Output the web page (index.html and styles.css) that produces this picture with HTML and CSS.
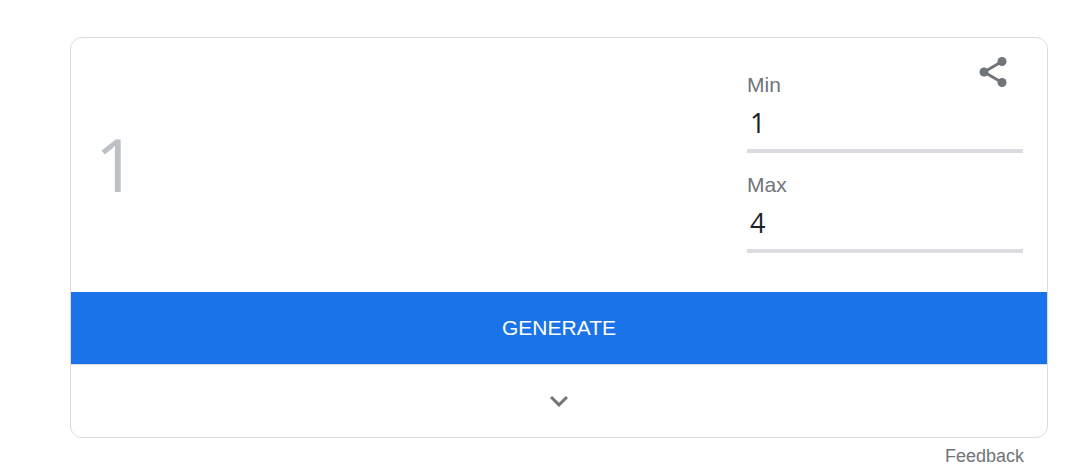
FILE: index.html
```html
<!DOCTYPE html>
<html lang="en">
<head>
<meta charset="utf-8">
<title>Random number generator</title>
<link rel="stylesheet" href="styles.css">
</head>
<body>
<main class="widget">
  <section class="card">
    <div class="card-body">
      <output class="result" for="min max">1</output>
      <form class="range" id="range">
        <label class="label" for="min">Min</label>
        <input class="number" id="min" type="text" inputmode="numeric" value="1">
        <label class="label" for="max">Max</label>
        <input class="number" id="max" type="text" inputmode="numeric" value="4">
      </form>
      <button class="share" type="button" aria-label="Share">
        <svg class="share-icon" viewBox="0 0 24 24" aria-hidden="true"><path d="M6 12L18 5M6 12L18 19" fill="none" stroke="#70757a" stroke-width="2"/><circle cx="6" cy="12" r="3"/><circle cx="18" cy="5" r="3"/><circle cx="18" cy="19" r="3"/></svg>
      </button>
    </div>
    <button class="generate" type="button">GENERATE</button>
    <button class="expand" type="button" aria-label="Show more">
      <svg class="expand-icon" viewBox="0 0 24 24" aria-hidden="true"><path d="M7.410 8.590L12 13.170l4.590-4.580L18 10l-6 6-6-6z"/></svg>
    </button>
  </section>
  <a class="feedback" href="#feedback">Feedback</a>
</main>
</body>
</html>
```
FILE: styles.css
```css
* {
  box-sizing: border-box;
}

body {
  margin: 0;
  background: #fff;
  color: #202124;
  font-family: "Liberation Sans", Arial, sans-serif;
}

button {
  padding: 0;
  border: 0;
  background: none;
  font: inherit;
  cursor: pointer;
}

.widget {
  display: flex;
  flex-direction: column;
  padding: 37px 43px 0 70px;
}

.card {
  display: flex;
  flex-direction: column;
  overflow: hidden;
  border: 1px solid #dadce0;
  border-radius: 12px;
}

.card-body {
  position: relative;
  display: flex;
  align-items: center;
  justify-content: space-between;
  padding: 32px 24px 39px;
}

.result {
  padding-top: 4px;
  color: #bdc1c6;
  font-family: "Open Sans", sans-serif;
  font-size: 73px;
  font-weight: 500;
  line-height: 80px;
}

.range {
  display: flex;
  flex-direction: column;
  width: 276px;
}

.label {
  color: #70757a;
  font-size: 21px;
  line-height: 30px;
}

.number {
  width: 100%;
  height: 53px;
  margin-bottom: 17px;
  padding: 0 3px 5px;
  border: 0;
  border-bottom: 4px solid #dadce0;
  background: none;
  color: #202124;
  font-family: "Open Sans", sans-serif;
  font-size: 27px;
  font-weight: 500;
}

.number:last-child {
  margin-bottom: 0;
}

.share {
  position: absolute;
  top: 16px;
  right: 36px;
}

.share-icon,
.expand-icon {
  display: block;
  width: 36px;
  height: 36px;
  fill: #70757a;
}

.generate {
  height: 72px;
  background: #1a73e8;
  color: #fff;
  font-size: 21px;
}

.expand {
  display: flex;
  align-items: center;
  justify-content: center;
  height: 73px;
  border-top: 1px solid #dadce0;
}

.feedback {
  align-self: flex-end;
  margin: 8px 24px 0 0;
  color: #70757a;
  font-size: 18px;
  line-height: 20px;
  text-decoration: none;
}
```
